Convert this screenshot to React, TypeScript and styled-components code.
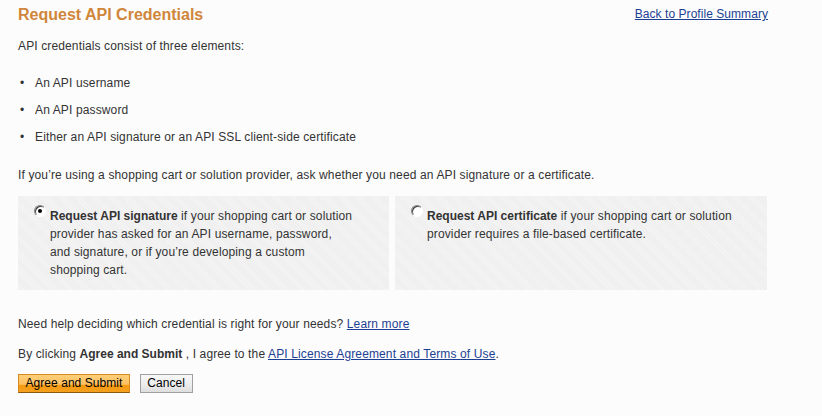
import React from "react";
import styled, { createGlobalStyle } from "styled-components";

const Global = createGlobalStyle`
  html, body { margin: 0; padding: 0; background: #fcfcfc; }
  body {
    font-family: Arial, "Liberation Sans", sans-serif;
    font-size: 12px;
    letter-spacing: 0.13px;
    color: #333;
  }
  b { letter-spacing: 0; }
`;

const Page = styled.div`
  width: 750px;
  padding: 4px 18px 0 18px;
`;

const Header = styled.div`
  display: flex;
  justify-content: space-between;
  align-items: flex-start;
`;

const Title = styled.h1`
  margin: 0;
  font-size: 16px;
  line-height: 22px;
  font-weight: bold;
  letter-spacing: 0;
  color: #d0863a;
`;

const Link = styled.a`
  color: #1c3f94;
  text-decoration: underline;
  cursor: pointer;
`;

const TopLink = styled(Link)`
  margin-top: 3px;
  line-height: 14px;
  letter-spacing: 0.05px;
`;

const Para = styled.p<{ $top: number }>`
  margin: ${(p) => p.$top}px 0 0 0;
  line-height: 14px;
`;

const List = styled.ul`
  margin: 23px 0 0 0;
  padding: 0;
  list-style: none;
  display: flex;
  flex-direction: column;
  gap: 13px;
`;

const Item = styled.li`
  display: flex;
  line-height: 14px;
  &::before {
    content: "•";
    width: 17px;
    padding-left: 2px;
    box-sizing: border-box;
  }
`;

const Options = styled.div`
  margin-top: 14px;
  display: grid;
  grid-template-columns: 371px 372px;
  gap: 6px;
`;

const Panel = styled.label`
  display: flex;
  align-items: flex-start;
  height: 94px;
  box-sizing: border-box;
  padding: 11px 0 0 16px;
  background: #eeeeee;
  background-image: repeating-linear-gradient(45deg, rgba(255,255,255,0.35) 0 1px, transparent 1px 2px);
  line-height: 18px;
`;

const Radio = styled.span<{ $checked?: boolean }>`
  flex: none;
  position: relative;
  width: 12px;
  height: 12px;
  margin: -2px 4px 0 0;
  border-radius: 50%;
  box-sizing: border-box;
  border: 1px solid;
  border-color: #808080 #fff #fff #808080;
  background: #fff;
  box-shadow: inset 1px 1px 0 #404040;
  &::after {
    content: "";
    display: ${(p) => (p.$checked ? "block" : "none")};
    position: absolute;
    left: 3px;
    top: 3px;
    width: 4px;
    height: 4px;
    border-radius: 50%;
    background: #000;
  }
`;

const PanelText = styled.span<{ $width: number }>`
  flex: none;
  width: ${(p) => p.$width}px;
`;

const Buttons = styled.div`
  margin-top: 13px;
  display: flex;
  gap: 10px;
`;

const Button = styled.button<{ $primary?: boolean }>`
  font-family: Arial, "Liberation Sans", sans-serif;
  font-size: 12px;
  letter-spacing: 0.05px;
  color: #000;
  height: 19px;
  line-height: 15px;
  padding: 0 6.5px;
  cursor: pointer;
  ${(p) =>
    p.$primary
      ? `
    background: linear-gradient(#ffcf7a 0%, #ffc060 55%, #f59a10 60%, #f5a020 100%);
    border: 1px solid #d78a20;
    border-bottom-color: #8a5a10;
  `
      : `
    background: linear-gradient(#f8f8f8 0%, #ececec 60%, #dedede 100%);
    border: 1px solid #a0a0a0;
  `}
`;

export default function App() {
  return (
    <>
      <Global />
      <Page>
        <Header>
          <Title>Request API Credentials</Title>
          <TopLink>Back to Profile Summary</TopLink>
        </Header>
        <Para $top={13}>API credentials consist of three elements:</Para>
        <List>
          <Item>An API username</Item>
          <Item>An API password</Item>
          <Item>Either an API signature or an API SSL client-side certificate</Item>
        </List>
        <Para $top={24}>
          If you’re using a shopping cart or solution provider, ask whether you need an API signature or a certificate.
        </Para>
        <Options>
          <Panel>
            <Radio $checked />
            <PanelText $width={304}>
              <b>Request API signature</b> if your shopping cart or solution provider has asked for an API username, password, and signature, or if you’re developing a custom shopping cart.
            </PanelText>
          </Panel>
          <Panel>
            <Radio />
            <PanelText $width={312}>
              <b>Request API certificate</b> if your shopping cart or solution provider requires a file-based certificate.
            </PanelText>
          </Panel>
        </Options>
        <Para $top={27}>
          Need help deciding which credential is right for your needs? <Link>Learn more</Link>
        </Para>
        <Para $top={16}>
          By clicking <b>Agree and Submit</b> , I agree to the <Link>API License Agreement and Terms of Use</Link>.
        </Para>
        <Buttons>
          <Button $primary>Agree and Submit</Button>
          <Button>Cancel</Button>
        </Buttons>
      </Page>
    </>
  );
}
